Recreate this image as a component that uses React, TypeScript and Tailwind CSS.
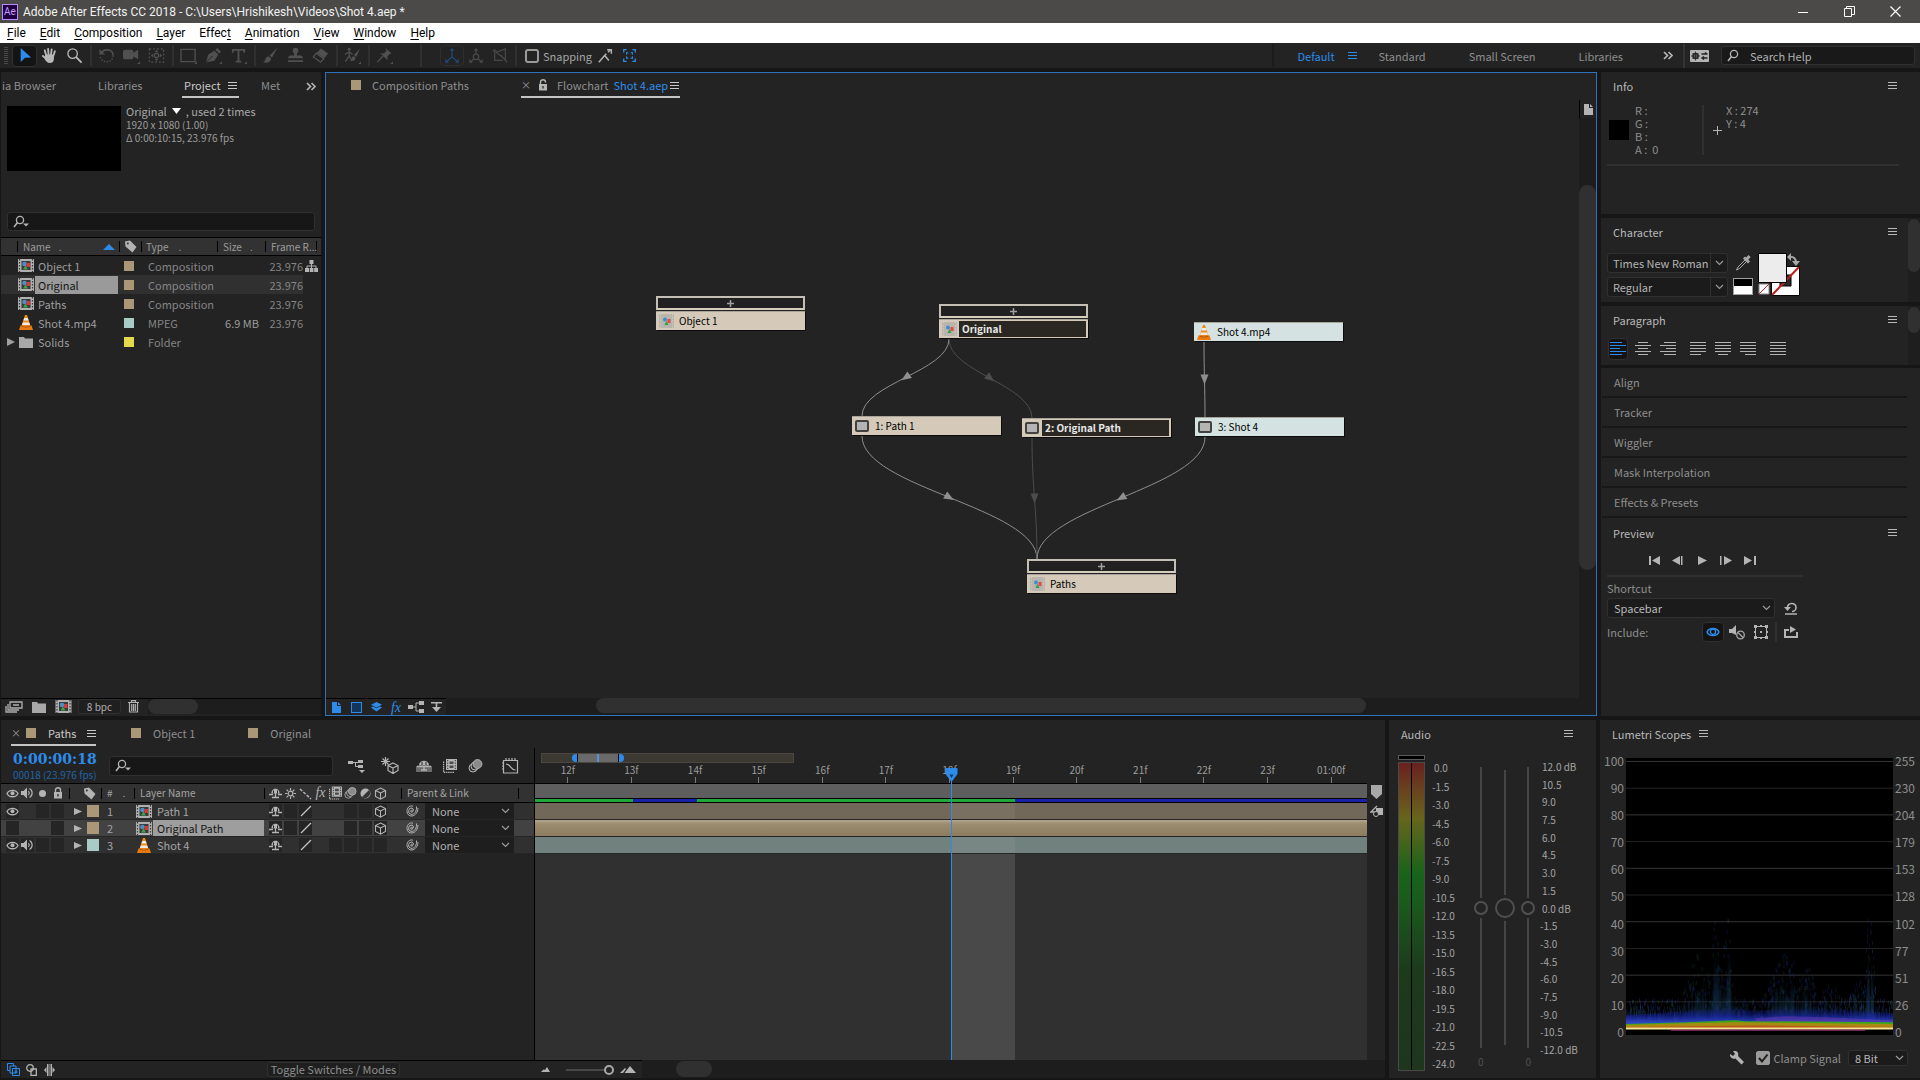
import { useState, type ReactNode } from 'react';
import { clsx } from 'clsx';

interface IconProps {
  children: ReactNode;
  className?: string;
  size?: number;
}

// every glyph is drawn on an 18 unit grid
function Icon({ children, className, size = 18 }: IconProps) {
  return (
    <svg
      width={size}
      height={size}
      viewBox="0 0 18 18"
      fill="none"
      stroke="currentColor"
      strokeWidth="1.4"
      className={clsx('shrink-0', className)}
      aria-hidden="true"
    >
      {children}
    </svg>
  );
}

const MenuGlyph = ({ className }: { className?: string }) => (
  <svg width="9" height="9" viewBox="0 0 9 9" className={clsx('shrink-0', className)} aria-hidden="true">
    <path d="M0 1.5h9M0 4.5h9M0 7.5h9" stroke="currentColor" strokeWidth="1" />
  </svg>
);

const MoreGlyph = () => (
  <svg width="11" height="9" viewBox="0 0 11 9" aria-hidden="true">
    <path d="M1 1l3.500 3.500L1 8M5.500 1L9 4.500 5.500 8" stroke="#b4b4b4" strokeWidth="1.700" fill="none" />
  </svg>
);

const Chevron = ({ className }: { className?: string }) => (
  <svg width="9" height="6" viewBox="0 0 9 6" className={className} aria-hidden="true">
    <path d="M1 1l3.500 3.500L8 1" stroke="#9a9a9a" strokeWidth="1.200" fill="none" />
  </svg>
);

const SearchGlyph = ({ arrow }: { arrow?: boolean }) => (
  <svg width="18" height="14" viewBox="0 0 18 14" fill="none" className="shrink-0" aria-hidden="true">
    <circle cx="8" cy="5" r="3.600" stroke="#b4b4b4" strokeWidth="1.300" />
    <path d="M5.500 7.600L2 12" stroke="#b4b4b4" strokeWidth="1.600" />
    {arrow && <path d="M11 8.500h6l-3 3z" fill="#b4b4b4" />}
  </svg>
);

const CompIcon = ({ size = 16 }: { size?: number }) => (
  <svg width={size} height="13" viewBox="0 0 16 13" className="shrink-0" aria-hidden="true">
    <rect width="16" height="13" fill="#b0b0b0" />
    <path d="M1.500 0v13M14.500 0v13" stroke="#3a3a3a" strokeWidth="1.200" strokeDasharray="1.500 1.500" />
    <rect x="3.500" y="2" width="9" height="9" fill="#3a3a3a" />
    <circle cx="6.500" cy="5" r="2.300" fill="#4a90c8" />
    <rect x="8.500" y="4" width="3.500" height="4" fill="#d23c32" />
    <path d="M5 10.500l2.500-4 2.500 4z" fill="#3da34d" />
  </svg>
);

const ConeIcon = () => (
  <svg width="14" height="15" viewBox="0 0 14 15" className="shrink-0" aria-hidden="true">
    <path d="M6 0h2l3.500 11h-9z" fill="#f08a1c" />
    <path d="M5.200 3h3.600l.8 2.500H4.400zM3.800 7.500h6.400l.8 2.500H3z" fill="#f0ece4" />
    <path d="M1.500 10.500h11L14 15H0z" fill="#e87a10" />
    <path d="M3 10.500c1 1.500 7 1.500 8 0l.5 1c-1.500 1.500-7.500 1.500-9 0z" fill="#b85a08" />
  </svg>
);

const FolderIcon = () => (
  <svg width="14" height="12" viewBox="0 0 14 12" className="shrink-0" aria-hidden="true">
    <path d="M0 1h5l1 1.500h8V12H0z" fill="#a8a8a8" />
  </svg>
);

const TagIcon = () => (
  <svg width="13" height="13" viewBox="0 0 13 13" className="shrink-0" aria-hidden="true">
    <path d="M1 1.500L6 .5l6.500 6.500-4 5.500L1.500 6.500z" fill="#b4b4b4" />
    <circle cx="3.800" cy="3.500" r="1" fill="#323232" />
  </svg>
);

const EyeIcon = ({ className }: { className?: string }) => (
  <svg width="13" height="9" viewBox="0 0 13 9" fill="none" className={className} aria-hidden="true">
    <path d="M1 4.500C3 .2 10 .2 12 4.500 10 8.800 3 8.800 1 4.500z" stroke="currentColor" strokeWidth="1.300" />
    <circle cx="6.500" cy="4.300" r="2" fill="currentColor" />
  </svg>
);

const SpeakerIcon = () => (
  <svg width="13" height="12" viewBox="0 0 13 12" fill="none" aria-hidden="true">
    <path d="M0 4h2.500L6 .5v11L2.500 8H0z" fill="#b4b4b4" />
    <path d="M7.500 4q1.500 2 0 4M8.500 1.500c3.500 2 3.500 7 0 9" stroke="#b4b4b4" strokeWidth="1.200" />
  </svg>
);

const LockIcon = ({ open }: { open?: boolean }) => (
  <svg width="10" height="12" viewBox="0 0 10 12" fill="none" className="shrink-0" aria-hidden="true">
    <path d={open ? 'M2.500 5V3c0-3 5-3 5 0v.5' : 'M2.500 5V3c0-3 5-3 5 0v2'} stroke="#b4b4b4" strokeWidth="1.400" />
    <rect x="1" y="5" width="8" height="6.500" fill="#b4b4b4" />
    <path d="M5 7v2.500" stroke="#2a2a2a" strokeWidth="1.300" />
  </svg>
);

const ShyIcon = () => (
  <svg width="13" height="13" viewBox="0 0 13 13" fill="none" stroke="#b4b4b4" aria-hidden="true">
    <path d="M2.500 6.500C2 0 11 0 10.500 6.500z" fill="#b4b4b4" stroke="none" />
    <path d="M4.500 3.500v3M8.500 3.500v3" stroke="#2a2a2a" />
    <path d="M0 7.500h4M9 7.500h4M6.500 5v6M3 10.500h7" strokeWidth="1.300" />
  </svg>
);

const CubeIcon = () => (
  <svg width="13" height="13" viewBox="0 0 13 13" fill="none" stroke="#b4b4b4" strokeWidth="1.100" aria-hidden="true">
    <path d="M6.500 1l5 2.500v6l-5 2.700-5-2.700v-6zM1.500 3.500l5 2.500 5-2.500M6.500 6v6" />
  </svg>
);

const BlurIcon = () => (
  <svg width="15" height="14" viewBox="0 0 15 14" aria-hidden="true">
    <circle cx="5" cy="9" r="4" fill="#323232" stroke="#b4b4b4" />
    <circle cx="7" cy="7" r="4" fill="#323232" stroke="#b4b4b4" />
    <circle cx="9.500" cy="5" r="4.400" fill="#8a8a8a" stroke="#b4b4b4" />
  </svg>
);

const FilmIcon = () => (
  <svg width="14" height="14" viewBox="0 0 14 14" aria-hidden="true">
    <path d="M3 0h11v11H3z" fill="#b4b4b4" />
    <path d="M.6 2.500v10.900h10.900" stroke="#b4b4b4" strokeWidth="1.200" fill="none" strokeDasharray="1.500 .7" />
    <path d="M4.700 1v9M12.300 1v9" stroke="#333" strokeDasharray="1.300 1.300" />
    <path d="M6.500 2.500h4v2.500h-4zM6.500 6.500h4v2.500h-4z" fill="#4a4a4a" />
  </svg>
);

const SunIcon = () => (
  <svg width="13" height="13" viewBox="0 0 13 13" stroke="#b4b4b4" strokeWidth="1.200" fill="none" aria-hidden="true">
    <circle cx="6.500" cy="6.500" r="2.300" />
    <path d="M6.500 1v2.500M6.500 9.500V12M1 6.500h2.500M9.500 6.500H12M2.600 2.600l1.700 1.700M8.700 8.700l1.700 1.700M10.400 2.600L8.700 4.300M4.300 8.700l-1.700 1.700" />
  </svg>
);

const SpiralIcon = () => (
  <svg width="13" height="12" viewBox="0 0 13 12" stroke="#b4b4b4" strokeWidth="1" fill="none" className="shrink-0" aria-hidden="true">
    <path d="M6.500 5.500A1 1 0 1 0 6 7.200 2.300 2.300 0 0 0 6 3 3.200 3.200 0 0 0 5 9.300C8.500 10 11 6 10.500 1.500" />
    <path d="M7 1.200C3 0 .8 3.500 1 6.500c.2 3 2.500 4.800 5 4.500 3.500-.5 6-4 5.900-8" />
  </svg>
);

const FxGlyph = ({ className }: { className?: string }) => (
  <span className={clsx("font-['Liberation_Serif',serif] text-sm leading-none italic", className)}>fx</span>
);

interface SelectProps {
  label: string;
  options: string[];
  className?: string;
  selectClassName?: string;
  divided?: boolean;
}

function Select({ label, options, className, selectClassName, divided }: SelectProps) {
  return (
    <span className={clsx('relative flex items-center', className)}>
      <select
        aria-label={label}
        className={clsx('h-full w-full appearance-none outline-none', selectClassName)}
      >
        {options.map((option) => (
          <option key={option}>{option}</option>
        ))}
      </select>
      <span
        className={clsx(
          'pointer-events-none absolute inset-y-0 right-0 flex w-[18px] items-center justify-center',
          divided && 'border-l border-[#303030]'
        )}
      >
        <Chevron />
      </span>
    </span>
  );
}

interface TabProps {
  children: ReactNode;
  active?: boolean;
  className?: string;
}

function Tab({ children, active, className }: TabProps) {
  return (
    <div
      className={clsx(
        'flex h-[26px] shrink-0 items-center border-b-2 pt-0.5',
        active ? 'border-[#c4c4c4] text-[#c8c8c8]' : 'border-transparent text-[#8e8e8e]',
        className
      )}
    >
      {children}
    </div>
  );
}

const Swatch = ({ className }: { className?: string }) => (
  <span className={clsx('size-[10px] shrink-0 bg-[#a99778]', className)} />
);

/* ---------- window chrome ---------- */

function TitleBar() {
  return (
    <header className="flex h-[23px] shrink-0 items-center bg-[#4b4a48] pl-0.5 font-[Roboto,sans-serif] text-xs text-[#f2f2f2]">
      <span className="flex size-4 items-center justify-center border border-[#b98cff] bg-[#1f0040] text-[10px] leading-none text-[#c79bff]">
        Ae
      </span>
      <h1 className="ml-[5px]">Adobe After Effects CC 2018 - C:\Users\Hrishikesh\Videos\Shot 4.aep *</h1>
      <div className="ml-auto flex">
        <button aria-label="Minimize" className="flex h-[23px] w-[46px] items-center justify-center">
          <svg width="10" height="10" viewBox="0 0 10 10" stroke="#fff"><path d="M0 5.500h10" /></svg>
        </button>
        <button aria-label="Restore" className="flex h-[23px] w-[46px] items-center justify-center">
          <svg width="11" height="11" viewBox="0 0 11 11" stroke="#fff" fill="none">
            <path d="M.5 2.500h7v8h-7zM2.500 2.500v-2h8v8h-3" />
          </svg>
        </button>
        <button aria-label="Close" className="mr-0.5 flex h-[23px] w-[46px] items-center justify-center">
          <svg width="11" height="11" viewBox="0 0 11 11" stroke="#fff" strokeWidth="1.200"><path d="M.5.5l10 10M10.500.5l-10 10" /></svg>
        </button>
      </div>
    </header>
  );
}

const menus: [string, string, string][] = [
  ['', 'F', 'ile'],
  ['', 'E', 'dit'],
  ['', 'C', 'omposition'],
  ['', 'L', 'ayer'],
  ['Effec', 't', ''],
  ['', 'A', 'nimation'],
  ['', 'V', 'iew'],
  ['', 'W', 'indow'],
  ['', 'H', 'elp'],
];

function MenuBar() {
  return (
    <nav className="flex h-5 shrink-0 items-center gap-[14px] bg-white pl-[7px] font-[Roboto,sans-serif] text-xs text-black">
      {menus.map(([before, key, after]) => (
        <button key={before + key + after}>
          {before}
          <u className="underline-offset-2">{key}</u>
          {after}
        </button>
      ))}
    </nav>
  );
}

const Corner = () => <path d="M18 15v3h-3z" fill="currentColor" stroke="none" />;

const toolGroups: { name: string; icon: ReactNode; tone?: string }[][] = [
  [
    { name: 'Selection', tone: 'text-[#2d8ceb]', icon: <path d="M5 1v15l4.500-4.500L16 11z" fill="currentColor" stroke="none" /> },
    {
      name: 'Hand',
      tone: 'text-[#b8b8b8]',
      icon: (
        <>
          <path d="M5.500 9L4 3.500M8 8.500L7.500 2M10.500 8.500l.8-6M13 9.500l1.700-5M5 12l-3-2.500" strokeWidth="2" strokeLinecap="round" />
          <path d="M4.500 8h9.200v4.500c0 3-1.500 4.500-4.500 4.500-2.500 0-4-2-5.500-4.500z" fill="currentColor" stroke="none" />
        </>
      ),
    },
    {
      name: 'Zoom',
      tone: 'text-[#b8b8b8]',
      icon: (
        <>
          <circle cx="7" cy="7" r="5" />
          <path d="M10.800 10.800L16.500 16.500" strokeWidth="2" />
        </>
      ),
    },
  ],
  [
    {
      name: 'Rotation',
      icon: (
        <>
          <path d="M4 6c3-5 12-3.500 12 3" strokeWidth="1.800" />
          <path d="M16 9c0 8-12 9-13.500 1.500" strokeDasharray="1.500 1.500" />
          <path d="M1.500 2v6h6z" fill="currentColor" stroke="none" />
        </>
      ),
    },
    {
      name: 'Camera',
      icon: (
        <>
          <path d="M0 5q0-2 2-2h7q2 0 2 2v1l5-3v10l-5-3v1q0 2-2 2H2q-2 0-2-2z" fill="currentColor" stroke="none" />
          <Corner />
        </>
      ),
    },
    {
      name: 'Pan Behind',
      icon: (
        <>
          <path d="M1.500 2h15v14h-15z" strokeDasharray="2 2" />
          <circle cx="9" cy="9" r="2.200" />
          <path d="M9 3l2 2.500H7zM9 15l2-2.500H7zM3 9l2.500-2v4zM15 9l-2.500-2v4z" fill="currentColor" stroke="none" />
        </>
      ),
    },
  ],
  [
    {
      name: 'Rectangle',
      icon: (
        <>
          <path d="M1 2.500h15v13H1z" />
          <Corner />
        </>
      ),
    },
    {
      name: 'Pen',
      icon: (
        <>
          <path d="M1 16.500L3.500 8 10 4l4 4-4 6.500zM11 3l2-2 4 4-2 2z" fill="currentColor" stroke="none" />
          <path d="M1.500 16L8 9.500" stroke="#232323" strokeWidth="1" />
          <Corner />
        </>
      ),
    },
    {
      name: 'Type',
      icon: (
        <>
          <path d="M3 6V3h12v3M9 3v13M6 15.500h6" strokeWidth="2" />
          <Corner />
        </>
      ),
    },
  ],
  [
    {
      name: 'Brush',
      icon: <path d="M16.500.5L8 9l2.500 2.500zM7 10c-4 0-2 4-6 6 4 2 9 0 8.500-4z" fill="currentColor" stroke="none" />,
    },
    {
      name: 'Clone Stamp',
      icon: <path d="M7.500 9V6.500a3 3 0 1 1 3 0V9H15q2 1 2 3H1q0-2 2-3zM1 14h16v2H1z" fill="currentColor" stroke="none" />,
    },
    {
      name: 'Eraser',
      icon: (
        <>
          <path d="M9.500 1.500L17 7l-4 5-8-6z" fill="currentColor" stroke="none" />
          <path d="M4.500 6.500l8 6-3.500 3.500-7.500-5.500z" />
        </>
      ),
    },
  ],
  [
    {
      name: 'Roto Brush',
      icon: (
        <>
          <path d="M17 1.500l-6.500 7 2.500 2zM10 9.500c-2 1-1.500 3.500-4 5 4 1 6.500-.5 6-3.500z" fill="currentColor" stroke="none" />
          <circle cx="5.500" cy="2.500" r="1.600" fill="currentColor" stroke="none" />
          <path d="M5.500 4.500v5l-4 6M5.500 9.500l2 3M1 8l4.500-3L9 8" />
          <Corner />
        </>
      ),
    },
  ],
  [
    {
      name: 'Puppet Pin',
      icon: (
        <>
          <path d="M10 1l6.500 6-2 .5-2.500 2.500.5 4L4.500 6.500l4 .5L11 4z" fill="currentColor" stroke="none" />
          <path d="M7.500 9.500L1.500 16" />
          <Corner />
        </>
      ),
    },
  ],
];

const ToolSeparator = () => (
  <span className="flex w-[7px] justify-center">
    <span className="h-[21px] w-0.5 bg-[#303030]" />
  </span>
);

function Toolbar() {
  const [snapping, setSnapping] = useState(false);

  return (
    <div className="flex h-[25px] shrink-0 items-center bg-[#232323]">
      <span className="mx-1 h-[18px] w-1 bg-[repeating-linear-gradient(#484848_0_1px,transparent_1px_2px)]" />
      {toolGroups.map((group, i) => (
        <div key={group[0].name} className="flex items-center">
          {i > 0 && <ToolSeparator />}
          {group.map((tool) => (
            <button
              key={tool.name}
              aria-label={tool.name}
              className={clsx(
                'flex h-[22px] w-[25px] items-center justify-center',
                tool.tone ?? 'text-[#505050]',
                tool.name === 'Selection' && 'rounded-sm border border-[#303030] bg-[#141414]'
              )}
            >
              <Icon size={17}>{tool.icon}</Icon>
            </button>
          ))}
        </div>
      ))}
      <span className="mr-[18px] ml-[23px] h-[23px] w-0.5 bg-[#303030]" />
      <button aria-label="Local axis" className="flex h-[21px] w-6 items-center justify-center rounded-sm border border-[#2e2e2e] text-[#1f4a78]">
        <Icon size={16}><path d="M9 1v9L2 16M9 10l7 6M7 3l2-2 2 2M2 13v3h3M13 16h3v-3" /></Icon>
      </button>
      <button aria-label="World axis" className="flex w-6 justify-center text-[#484848]">
        <Icon size={16}><path d="M9 1v6M7 3l2-2 2 2M7 12l-5 4M11 12l5 4M2 13v3h3M13 16h3v-3" /><circle cx="9" cy="10" r="3" /></Icon>
      </button>
      <button aria-label="View axis" className="flex w-6 justify-center text-[#484848]">
        <Icon size={16}><path d="M3 4v10h9M5 5l10-4v12zM1 4l2-2 2 2M10 8l7 8" /></Icon>
      </button>
      <ToolSeparator />
      <label className="ml-1.5 flex items-center gap-1 text-[#a6a6a6]">
        <input
          type="checkbox"
          checked={snapping}
          onChange={(e) => setSnapping(e.target.checked)}
          className="size-[14px] appearance-none rounded-[3px] border-2 border-[#9a9a9a] checked:bg-[#9a9a9a]"
        />
        Snapping
      </label>
      <button aria-label="Snap to edges" className="ml-1.5 text-[#b0b0b0]">
        <Icon size={15}><path d="M1 17l7-8 5 6M8 9l2-2M12 5l3-3M11 2h5v5" strokeWidth="1.800" /></Icon>
      </button>
      <button aria-label="Snap to features" className="ml-2.5 text-[#2d8ceb]">
        <Icon size={13}>
          <path d="M1 5V1h4M13 1h4v4M17 13v4h-4M5 17H1v-4" strokeWidth="1.800" />
          <path d="M7.500 5.500L5 5v3M10.500 5.500L13 5v3M7.500 12.500L5 13v-3M10.500 12.500L13 13v-3" />
        </Icon>
      </button>

      <div className="ml-auto flex items-center text-[#8e8e8e]">
        <span className="h-[23px] w-0.5 bg-[#1b1b1b]" />
        <button className="ml-[23px] flex items-center gap-[13px] text-[#2d8ceb]">
          Default <MenuGlyph />
        </button>
        <button className="ml-[22px]">Standard</button>
        <button className="ml-[43px]">Small Screen</button>
        <button className="ml-[43px]">Libraries</button>
        <button aria-label="More workspaces" className="ml-10"><MoreGlyph /></button>
        <span className="mr-[5px] ml-[9px] h-6 w-0.5 bg-[#343434]" />
        <button aria-label="Sync settings">
          <svg width="19" height="12" viewBox="0 0 19 12">
            <rect width="19" height="12" rx="1" fill="#b4b4b4" />
            <circle cx="5.500" cy="6" r="2.500" fill="none" stroke="#232323" strokeWidth="1.500" />
            <path d="M5.500 1.500v9M1 6h9M2.500 3l6 6M8.500 3l-6 6" stroke="#232323" strokeWidth=".8" />
            <path d="M11.500 4h6M15 2.500L17 4M17.500 8h-6M14 6.500L12 8l2 1.500" stroke="#232323" strokeWidth="1.300" />
          </svg>
        </button>
        <label className="mr-[5px] ml-3 flex h-[19px] w-[194px] items-center gap-1.5 rounded-[3px] border border-[#303030] bg-[#191919] pl-1">
          <SearchGlyph />
          <input
            aria-label="Search Help"
            placeholder="Search Help"
            className="w-full bg-transparent outline-none placeholder:text-[#b0b0b0]"
          />
        </label>
      </div>
    </div>
  );
}

/* ---------- project ---------- */

const items = [
  { name: 'Object 1', kind: 'comp', swatch: 'bg-[#a99778]', type: 'Composition', size: '', rate: '23.976' },
  { name: 'Original', kind: 'comp', swatch: 'bg-[#a99778]', type: 'Composition', size: '', rate: '23.976', selected: true },
  { name: 'Paths', kind: 'comp', swatch: 'bg-[#a99778]', type: 'Composition', size: '', rate: '23.976' },
  { name: 'Shot 4.mp4', kind: 'video', swatch: 'bg-[#a9cbc5]', type: 'MPEG', size: '6.9 MB', rate: '23.976' },
  { name: 'Solids', kind: 'folder', swatch: 'bg-[#e4d84c]', type: 'Folder', size: '', rate: '' },
];

function HeadCell({ children, className }: { children?: ReactNode; className?: string }) {
  return (
    <th className="p-0 font-normal">
      <div className={clsx('flex h-[11px] items-center border-l border-black whitespace-nowrap', className)}>{children}</div>
    </th>
  );
}

function ProjectPanel() {
  return (
    <section className="flex w-80 shrink-0 flex-col bg-[#232323] text-[#9c9c9c]">
      <div className="flex h-7 shrink-0">
        <Tab className="w-[97px] pl-px">ia Browser</Tab>
        <Tab className="w-[84px]">Libraries</Tab>
        <Tab active className="w-[57px] justify-between px-0.5">
          Project <MenuGlyph />
        </Tab>
        <Tab className="ml-[22px] w-[45px]">Met</Tab>
        <button aria-label="More panels"><MoreGlyph /></button>
      </div>

      <div className="flex h-28 shrink-0 pt-1.5 pl-1.5">
        <div className="h-[65px] w-[114px] bg-black" />
        <div className="-mt-0.5 ml-[5px]">
          <p className="flex h-[14px] items-center gap-[5px] text-[#a8a8a8]">
            Original
            <svg width="9" height="6" viewBox="0 0 9 6"><path d="M0 0h9L4.500 6z" fill="#fff" /></svg>
            , used 2 times
          </p>
          <p className="text-[10px] leading-[13px]">1920 x 1080 (1.00)</p>
          <p className="text-[10px] leading-[13px]">Δ 0:00:10:15, 23.976 fps</p>
        </div>
      </div>

      <label className="mr-[6px] ml-1.5 flex h-[19px] shrink-0 items-center rounded-[3px] border border-[#303030] bg-[#171717] pl-1">
        <SearchGlyph arrow />
        <input aria-label="Search project" className="w-full bg-transparent outline-none" />
      </label>

      <table className="mt-1.5 w-full table-fixed border-collapse text-left">
        <colgroup>
          <col className="w-4" />
          <col className="w-[102px]" />
          <col className="w-[22px]" />
          <col className="w-[76px]" />
          <col className="w-12" />
          <col className="w-[38px]" />
          <col />
        </colgroup>
        <thead className="bg-[#323232] text-[10px]">
          <tr className="h-[18px] border-y border-black">
            <th className="p-0" />
            <HeadCell className="pl-[5px]">
              Name
              <span className="ml-2">.</span>
              <svg width="12" height="6" viewBox="0 0 12 6" className="mr-1 ml-auto"><path d="M6 0l6 6H0z" fill="#2d8ceb" /></svg>
            </HeadCell>
            <HeadCell className="pl-1"><TagIcon /></HeadCell>
            <HeadCell className="pl-1">Type<span className="ml-2.5">.</span></HeadCell>
            <HeadCell className="pl-[5px]">Size<span className="ml-2">.</span></HeadCell>
            <th colSpan={2} className="p-0 pr-1 font-normal">
              <div className="flex h-[11px] items-center border-x border-black pl-[5px] whitespace-nowrap">Frame R...</div>
            </th>
          </tr>
        </thead>
        <tbody>
          {items.map((item, i) => {
            const cell = clsx('p-0', item.selected && 'bg-[#303030]');
            return (
              <tr key={item.name} className="h-[19px]">
                <td className={cell}>
                  {item.kind === 'folder' && (
                    <svg width="8" height="8" viewBox="0 0 8 8" className="ml-1.5"><path d="M0 0l8 4-8 4z" fill="#a0a0a0" /></svg>
                  )}
                </td>
                <td className={cell}>
                  <div className="flex h-[19px] items-center">
                    <span className="flex w-[18px] shrink-0 items-center justify-center">
                      {item.kind === 'comp' && <CompIcon />}
                      {item.kind === 'video' && <ConeIcon />}
                      {item.kind === 'folder' && <FolderIcon />}
                    </span>
                    <span
                      className={clsx(
                        'flex h-[18px] flex-1 items-center pl-[3px]',
                        item.selected && 'mr-px bg-[#9a9a9a] text-[#161616]'
                      )}
                    >
                      {item.name}
                    </span>
                  </div>
                </td>
                <td className={cell}><span className={clsx('ml-[5px] block size-[10px]', item.swatch)} /></td>
                <td className={clsx(cell, 'pl-[7px] text-[#858585]')}>{item.type}</td>
                <td className={clsx(cell, 'pr-1.5 text-right whitespace-nowrap')}>{item.size}</td>
                <td className={clsx(cell, 'text-right text-[#858585]')}>{item.rate}</td>
                <td className="p-0">
                  {i === 0 && (
                    <svg width="13" height="12" viewBox="0 0 13 12" fill="#b4b4b4" className="ml-0.5">
                      <path d="M4.500 0h4v4h-4zM0 8h4v4H0zM4.700 8h3.800v4H4.700zM9.200 8H13v4H9.200z" />
                      <path d="M6.500 4v4M2 8V6h9v2" stroke="#b4b4b4" fill="none" />
                    </svg>
                  )}
                </td>
              </tr>
            );
          })}
        </tbody>
      </table>

      <div className="mt-auto flex h-[18px] shrink-0 items-center border-t border-black pb-0.5 pl-1 text-[#b0b0b0]">
        <button aria-label="Interpret footage">
          <svg width="18" height="12" viewBox="0 0 18 12" fill="none" stroke="#b0b0b0" strokeWidth="1.300">
            <path d="M5 1h12v6H5zM3 3v6h11M1 5v6h11M8 4h6" />
          </svg>
        </button>
        <button aria-label="New folder" className="ml-[9px]"><FolderIcon /></button>
        <button aria-label="New composition" className="ml-[9px]"><CompIcon size={17} /></button>
        <button className="ml-1.5 h-[15px] w-[43px] rounded-[3px] border border-[#303030] bg-[#1f1f1f] text-[10px] leading-[13px]">8 bpc</button>
        <button aria-label="Delete" className="ml-[7px]">
          <svg width="11" height="13" viewBox="0 0 11 13" fill="none" stroke="#b0b0b0" strokeWidth="1.200">
            <path d="M0 2.500h11M3.500 2V.7h4V2M1.500 3v9h8V3M3.700 4v7M5.500 4v7M7.300 4v7" />
          </svg>
        </button>
        <div className="ml-[9px] h-full flex-1 bg-[#1d1d1d]">
          <div className="h-[15px] w-[50px] rounded-full bg-[#303030]" />
        </div>
      </div>
    </section>
  );
}

/* ---------- flowchart ---------- */

interface FlowNode {
  x: number;
  y: number;
  label: string;
  kind: 'comp' | 'layer' | 'video';
  tone: 'sand' | 'aqua';
  selected?: boolean;
}

const nodes: FlowNode[] = [
  { x: 330, y: 196, label: 'Object 1', kind: 'comp', tone: 'sand' },
  { x: 613, y: 204, label: 'Original', kind: 'comp', tone: 'sand', selected: true },
  { x: 868, y: 222, label: 'Shot 4.mp4', kind: 'video', tone: 'aqua' },
  { x: 526, y: 316, label: '1: Path 1', kind: 'layer', tone: 'sand' },
  { x: 696, y: 318, label: '2: Original Path', kind: 'layer', tone: 'sand', selected: true },
  { x: 869, y: 317, label: '3: Shot 4', kind: 'layer', tone: 'aqua' },
  { x: 701, y: 459, label: 'Paths', kind: 'comp', tone: 'sand' },
];

const edges = [
  { from: [623, 239], to: [536, 316], color: '#8f8f8f', angle: 146 },
  { from: [623, 239], to: [706, 318], color: '#4c4c4c', angle: 38 },
  { from: [878, 242], to: [879, 317], color: '#8f8f8f', angle: 90 },
  { from: [536, 336], to: [711, 459], color: '#8f8f8f', angle: 30 },
  { from: [706, 338], to: [711, 459], color: '#4c4c4c', angle: 90 },
  { from: [879, 337], to: [711, 459], color: '#8f8f8f', angle: 150 },
];

function NodeCard({ node }: { node: FlowNode }) {
  return (
    <div className="absolute w-[149px]" style={{ left: node.x, top: node.y }}>
      {node.kind === 'comp' && (
        <button
          aria-label={`Expand ${node.label}`}
          className="mb-px flex h-[14px] w-full items-center justify-center border-2 border-[#c4bfb4] border-b-[#d6cebd] bg-[#212121]"
        >
          <svg width="7" height="7" viewBox="0 0 7 7"><path d="M3.500 0v7M0 3.500h7" stroke="#a0a0a0" strokeWidth="1.500" /></svg>
        </button>
      )}
      <div
        className={clsx(
          'flex h-[19px] items-center border-t border-[#a8a49a] text-[10px] text-black shadow-[1px_1px_0_#0c0c0c]',
          node.tone === 'sand' ? 'bg-[#d5cab9]' : 'bg-[#d4e3e1]'
        )}
      >
        <span className="flex w-5 shrink-0 justify-center">
          {node.kind === 'comp' && (
            <svg width="15" height="14" viewBox="0 0 15 14">
              <rect width="15" height="14" fill="#b9b5ac" />
              <path d="M1.500 0v14M13.500 0v14" stroke="#d0cabd" strokeDasharray="1.500 1.500" />
              <circle cx="6" cy="5.500" r="2" fill="#3d8fd0" />
              <path d="M8.500 5h3v4h-3z" fill="#e04a40" />
              <path d="M5.500 11L7.500 7l2 4z" fill="#2f9e48" />
            </svg>
          )}
          {node.kind === 'video' && <ConeIcon />}
          {node.kind === 'layer' && <span className="h-3 w-[14px] rounded-xs border-2 border-[#44423e] bg-[#b4b4b4]" />}
        </span>
        <span
          className={clsx(
            'flex items-center whitespace-nowrap',
            node.selected ? 'my-px mr-0.5 h-4 flex-1 bg-[#2a2723] pl-[3px] font-bold text-[#e8e8e8]' : 'pl-[3px]'
          )}
        >
          {node.label}
        </span>
      </div>
    </div>
  );
}

function FlowchartPanel() {
  return (
    <section className="flex min-w-0 flex-1 flex-col border border-[#2f74b8] bg-[#232323]">
      <div className="flex h-[27px] shrink-0 items-end pb-0.5">
        <Tab className="ml-[25px]">
          <Swatch className="mr-[11px]" />
          Composition Paths
        </Tab>
        <Tab active className="ml-[52px] w-[159px] pr-px">
          <button aria-label="Close flowchart" className="w-[7px] text-[10px] leading-none text-[#9a9a9a]">×</button>
          <span className="ml-2.5 flex"><LockIcon open /></span>
          <span className="ml-[9px] flex gap-[5px] whitespace-nowrap text-[#8e8e8e]">
            Flowchart <span className="text-[#2d8ceb]">Shot 4.aep</span>
          </span>
          <MenuGlyph className="ml-auto" />
        </Tab>
      </div>

      <div className="flex min-h-0 flex-1">
        <div className="relative min-w-0 flex-1 overflow-hidden">
          <svg className="absolute inset-0 size-full" fill="none">
            {edges.map(({ from: [x1, y1], to: [x2, y2], color, angle }, i) => {
              const bend = (y2 - y1) * 0.42;
              return (
                <g key={i}>
                  <path d={`M${x1} ${y1}C${x1} ${y1 + bend} ${x2} ${y2 - bend} ${x2} ${y2}`} stroke={color} />
                  <path
                    d="M5 0L-5 -4V4z"
                    fill={color}
                    transform={`translate(${(x1 + x2) / 2} ${(y1 + y2) / 2}) rotate(${angle})`}
                  />
                </g>
              );
            })}
          </svg>
          {nodes.map((node) => (
            <NodeCard key={node.label} node={node} />
          ))}
        </div>
        <div className="flex w-[17px] flex-col">
          <button aria-label="Comp marker" className="flex h-[18px] shrink-0 items-center justify-center border-l border-black">
            <svg width="9" height="11" viewBox="0 0 9 11"><path d="M0 0h5v4h4v7H0zM6 0l3 3H6z" fill="#b4b4b4" /></svg>
          </button>
          <div className="flex-1 bg-[#1d1d1d] pt-[67px]">
            <div className="h-[75%] rounded-full bg-[#303030]" />
          </div>
        </div>
      </div>

      <div className="flex h-[17px] shrink-0 items-center text-[#2d8ceb]">
        <div className="grid h-full w-[120px] grid-cols-6 place-items-center border-t border-black pb-px">
          <button aria-label="Show footage">
            <svg width="9" height="11" viewBox="0 0 9 11"><path d="M0 0h5v4h4v7H0zM6 0l3 3H6z" fill="#2d8ceb" /></svg>
          </button>
          <button aria-label="Show solids" className="size-[11px] border border-[#2d8ceb] bg-[#12355a]" />
          <button aria-label="Show layers">
            <svg width="11" height="10" viewBox="0 0 11 10" fill="#2d8ceb">
              <path d="M5.500 0L11 2.700 5.500 5.400 0 2.700zM0 5.500l2-1 3.500 1.800L9 4.500l2 1L5.500 9.500z" />
            </svg>
          </button>
          <button aria-label="Show effects"><FxGlyph /></button>
          <button aria-label="Flow lines">
            <svg width="16" height="12" viewBox="0 0 16 12" fill="#b4b4b4">
              <path d="M0 4h5v4H0zM11 0h5v4h-5zM11 8h5v4h-5z" />
              <path d="M5 6h3M12 2H8v8h4" stroke="#b4b4b4" fill="none" />
            </svg>
          </button>
          <button aria-label="Flow direction">
            <svg width="11" height="10" viewBox="0 0 11 10" fill="#b4b4b4"><path d="M0 0h11v1.500H0zM4.700 1h1.600v4H10L5.500 10 1 5h3.700z" /></svg>
          </button>
        </div>
        <div className="flex h-full flex-1 bg-[#1d1d1d]">
          <div className="ml-[13%] h-[15px] w-[67%] rounded-full bg-[#303030]" />
        </div>
      </div>
    </section>
  );
}

/* ---------- right column ---------- */

const PanelHead = ({ title, scrolls }: { title: string; scrolls?: boolean }) => (
  <div className={clsx('flex h-7 shrink-0 items-center justify-between pb-px pl-3 text-[#b8b8b8]', scrolls ? 'pr-[11px]' : 'pr-[23px]')}>
    <h2>{title}</h2>
    <MenuGlyph />
  </div>
);

const alignments = [
  { name: 'Left align', rows: [[2, 14], [2, 18], [2, 12], [2, 18], [2, 14]] },
  { name: 'Center', rows: [[5, 15], [2, 18], [5, 15], [2, 18], [5, 15]] },
  { name: 'Right align', rows: [[6, 18], [2, 18], [8, 18], [2, 18], [6, 18]] },
  { name: 'Justify last left', rows: [[2, 18], [2, 18], [2, 18], [2, 18], [2, 13]], gap: true },
  { name: 'Justify last center', rows: [[2, 18], [2, 18], [2, 18], [2, 18], [5, 15]] },
  { name: 'Justify last right', rows: [[2, 18], [2, 18], [2, 18], [2, 18], [7, 18]] },
  { name: 'Justify all', rows: [[2, 18], [2, 18], [2, 18], [2, 18], [2, 18]], gap: true },
];

const transport = [
  { name: 'First frame', d: 'M1 0h2v9H1zM12 0v9L4 4.500z' },
  { name: 'Previous frame', d: 'M0 4.500L8 0v9zM9 0h1.500v9H9z' },
  { name: 'Play', d: 'M2 0l9 4.500L2 9z' },
  { name: 'Next frame', d: 'M0 0h1.500v9H0zM4 0l8 4.500L4 9z' },
  { name: 'Last frame', d: 'M0 0l8 4.500L0 9zM10 0h2v9h-2z' },
];

const fontSelect = 'rounded-[3px] border border-[#303030] bg-[#1b1b1b] pl-[5px] text-[#b4b4b4]';

function RightColumn() {
  return (
    <aside className="flex w-[319px] shrink-0 flex-col text-[#8e8e8e]">
      <section className="h-[142px] shrink-0 bg-[#232323]">
        <PanelHead title="Info" />
        <div className="mr-[21px] ml-1.5 flex h-[66px] items-center border-b-2 border-[#303030] pb-1">
          <div className="ml-0.5 h-5 w-5 bg-black" />
          <div className="ml-1.5 w-[67px] leading-[13px]">
            <p>R :</p>
            <p>G :</p>
            <p>B :</p>
            <p>A :&nbsp;&nbsp;0</p>
          </div>
          <div className="h-[50px] w-0.5 bg-[#303030]" />
          <svg width="9" height="9" viewBox="0 0 9 9" className="ml-[9px]"><path d="M4.500 0v9M0 4.500h9" stroke="#b4b4b4" /></svg>
          <div className="mb-[26px] ml-1 leading-[13px]">
            <p>X : 274</p>
            <p>Y : 4</p>
          </div>
        </div>
      </section>

      <section className="mt-1 flex h-[84px] shrink-0 bg-[#232323]">
        <div className="flex-1">
          <PanelHead title="Character" scrolls />
          <div className="-mr-3 flex pt-[7px] pl-1.5">
            <div className="flex flex-col gap-1">
              <Select label="Font family" options={['Times New Roman']} className="h-5 w-[121px]" selectClassName={fontSelect} divided />
              <Select label="Font style" options={['Regular']} className="h-5 w-[121px]" selectClassName={fontSelect} divided />
            </div>
            <div className="ml-[5px] flex w-5 flex-col items-center gap-[7px]">
              <button aria-label="Eyedropper">
                <svg width="17" height="18" viewBox="0 0 17 18" fill="none" stroke="#a8a8a8">
                  <path d="M10.500 6.500L3 14l-1.500 3 3-1.500L12 8" />
                  <path d="M9 4.500l5 5M11.500 6.500L14.500 3" strokeWidth="3" />
                </svg>
              </button>
              <button aria-label="Set to black or white" className="h-[17px] w-5 border border-[#a0a0a0] bg-[linear-gradient(#000_50%,#fff_50%)]" />
            </div>
            <svg width="44" height="44" viewBox="0 0 44 44" className="ml-1">
              <path d="M14.500 13.500h28v29h-28z" fill="#fff" stroke="#000" />
              <path d="M23 22h11v11H23z" fill="#2a2a2a" stroke="#000" />
              <path d="M15 42L42 14" stroke="#b8201c" strokeWidth="2" />
              <path d="M1.500.5h28v29h-28z" fill="#ececec" stroke="#000" />
              <path d="M2 31h10v10H2z" fill="#fff" stroke="#888" />
              <path d="M2 41l10-10" stroke="#c8201c" />
              <path d="M32 4q7-1 7 6" stroke="#a8a8a8" strokeWidth="2" fill="none" />
              <path d="M30 4l4-4v8zM35 8h8l-4 5z" fill="#a8a8a8" />
            </svg>
          </div>
        </div>
        <div className="w-3 bg-[#1e1e1e] pt-px"><div className="h-[53px] rounded-full bg-[#303030]" /></div>
      </section>

      <section className="mt-1 flex h-[59px] shrink-0 bg-[#232323]">
        <div className="flex-1">
          <PanelHead title="Paragraph" scrolls />
          <div className="-mr-3 flex items-center gap-[5px] pt-1 pl-[7px]">
            {alignments.map(({ name, rows, gap }, i) => (
              <button
                key={name}
                aria-label={name}
                className={clsx(
                  'flex h-[22px] w-5 items-center justify-center rounded-sm border',
                  i === 0 ? 'border-[#303030] bg-[#141414] text-[#2d8ceb]' : 'border-transparent text-[#b4b4b4]',
                  gap && 'ml-[5px]'
                )}
              >
                <svg width="16" height="14" viewBox="2 0 16 14" className="shrink-0" stroke="currentColor">
                  {rows.map(([a, b], r) => (
                    <path key={r} d={`M${a} ${r * 3 + 0.5}H${b}`} />
                  ))}
                </svg>
              </button>
            ))}
          </div>
        </div>
        <div className="w-3 bg-[#1e1e1e] pt-px"><div className="h-[26px] rounded-full bg-[#303030]" /></div>
      </section>

      <div className="mt-[3px] shrink-0 bg-[#232323] pr-[13px] pl-px">
        {['Align', 'Tracker', 'Wiggler', 'Mask Interpolation', 'Effects & Presets'].map((name) => (
          <button key={name} className="flex h-[30px] w-full items-center border-b-2 border-[#171717] pl-3 text-left">
            {name}
          </button>
        ))}
      </div>

      <section className="flex-1 bg-[#232323] pt-px">
        <PanelHead title="Preview" />
        <div className="mr-[117px] ml-1.5 flex items-center justify-center gap-[12px] border-b-2 border-[#303030] pt-[9px] pr-1.5 pb-[10px]">
          {transport.map((button) => (
            <button key={button.name} aria-label={button.name}>
              <svg width="12" height="9" viewBox="0 0 12 9" fill="#b4b4b4"><path d={button.d} /></svg>
            </button>
          ))}
        </div>
        <div className="pl-1.5">
          <p className="pt-[3px] leading-4">Shortcut</p>
          <div className="mt-0.5 flex items-center">
            <Select
              label="Shortcut"
              options={['Spacebar']}
              className="h-5 w-[168px]"
              selectClassName="rounded-[3px] border border-[#303030] bg-[#1b1b1b] pl-1.5 text-[#b8b8b8]"
            />
            <button aria-label="Reset" className="ml-[9px]">
              <svg width="14" height="13" viewBox="0 0 14 13" fill="none" stroke="#b4b4b4" strokeWidth="1.600">
                <path d="M3.500 6C3 0 12 0 12 5.500 12 8 10 9.500 8 9.500M1 12h12" />
                <path d="M0 5h7L3.500 9z" fill="#b4b4b4" stroke="none" />
              </svg>
            </button>
          </div>
          <div className="mt-1 flex items-center">
            <span className="w-[95px]">Include:</span>
            <button aria-label="Include video" className="flex h-5 w-[22px] items-center justify-center rounded-sm border border-[#303030] bg-[#141414] text-[#2d8ceb]">
              <svg width="14" height="10" viewBox="0 0 14 10" fill="none" stroke="currentColor">
                <path d="M1 5C3 .3 11 .3 13 5 11 9.700 3 9.700 1 5z" strokeWidth="1.500" />
                <circle cx="7" cy="4.800" r="2.600" strokeWidth="1.300" />
              </svg>
            </button>
            <button aria-label="Include audio" className="ml-1">
              <svg width="18" height="16" viewBox="0 0 18 16" fill="none" stroke="#a8a8a8">
                <path d="M1 5h3l4-4v10L4 9H1z" fill="#b4b4b4" stroke="none" />
                <circle cx="12.500" cy="11" r="3.800" strokeWidth="1.300" />
                <path d="M10 8.500l5 5" strokeWidth="1.300" />
              </svg>
            </button>
            <button aria-label="Include overlays" className="ml-2">
              <svg width="14" height="14" viewBox="0 0 14 14" fill="none" stroke="#b4b4b4">
                <path d="M1.500 1.500h11v11h-11z" />
                <path d="M0 0h3v3H0zM11 0h3v3h-3zM0 11h3v3H0zM11 11h3v3h-3zM6 6h2v2H6zM6 0h2v2H6zM6 12h2v2H6zM0 6h2v2H0zM12 6h2v2h-2z" fill="#b4b4b4" stroke="none" />
              </svg>
            </button>
            <span className="ml-[7px] h-5 w-0.5 bg-[#303030]" />
            <button aria-label="Loop options" className="ml-[7px]">
              <svg width="14" height="12" viewBox="0 0 14 12" fill="none" stroke="#b4b4b4" strokeWidth="2">
                <path d="M5 4H1v7h12V6" />
                <path d="M6 0l6 3.500L6 7z" fill="#b4b4b4" stroke="none" />
              </svg>
            </button>
          </div>
        </div>
      </section>
    </aside>
  );
}

/* ---------- timeline ---------- */

const layers = [
  { id: 1, name: 'Path 1', video: false, visible: true, audio: false, swatch: 'bg-[#a99778]', track: 'bg-[#72685a]' },
  { id: 2, name: 'Original Path', video: false, visible: false, audio: false, swatch: 'bg-[#a99778]', track: 'bg-[linear-gradient(#b3a78e,#9c8c6f_25%,#8c7c60)]', selected: true },
  { id: 3, name: 'Shot 4', video: true, visible: true, audio: true, swatch: 'bg-[#a9cbc5]', track: 'bg-[#71817e]' },
];

const ruler = ['12f', '13f', '14f', '15f', '16f', '17f', '18f', '19f', '20f', '21f', '22f', '23f', '01:00f'];

const Slot = ({ box, children }: { box?: boolean; children?: ReactNode }) => (
  <span className="flex w-[15px] shrink-0 justify-center">
    <span className={clsx('flex h-[14px] w-[13px] items-center justify-center', box && 'bg-[#252525]')}>{children}</span>
  </span>
);

function LayerTable() {
  return (
    <table className="w-full table-fixed border-collapse text-left text-[#a4a4a4]">
      <colgroup>
        <col className="w-[68px]" />
        <col className="w-8" />
        <col className="w-[33px]" />
        <col className="w-[130px]" />
        <col className="w-[137px]" />
        <col className="w-[117px]" />
        <col />
      </colgroup>
      <thead className="bg-[#323232] text-[10px]">
        <tr className="h-[19px] border-y border-black">
          <th className="p-0">
            <div className="flex items-center pl-1 text-[#b4b4b4]">
              <Slot><EyeIcon /></Slot>
              <Slot><SpeakerIcon /></Slot>
              <Slot><span className="size-[7px] rounded-full bg-[#b4b4b4]" /></Slot>
              <Slot><LockIcon /></Slot>
            </div>
          </th>
          <HeadCell className="pl-[13px]"><TagIcon /></HeadCell>
          <HeadCell className="pl-[5px]">#<span className="ml-2.5">.</span></HeadCell>
          <HeadCell className="pl-[5px]">Layer Name</HeadCell>
          <HeadCell className="pl-[3px]">
            <Slot><ShyIcon /></Slot>
            <Slot><SunIcon /></Slot>
            <Slot>
              <svg width="13" height="13" viewBox="0 0 13 13"><path d="M1 2l11 10" stroke="#b4b4b4" strokeWidth="1.500" strokeDasharray="3 1.500" /></svg>
            </Slot>
            <Slot><FxGlyph className="text-[#b4b4b4]" /></Slot>
            <Slot><FilmIcon /></Slot>
            <Slot><BlurIcon /></Slot>
            <Slot>
              <svg width="11" height="11" viewBox="0 0 11 11"><circle cx="5.500" cy="5.500" r="5" fill="#b4b4b4" /><path d="M9 2A5 5 0 0 1 2 9z" fill="#333" /></svg>
            </Slot>
            <Slot><CubeIcon /></Slot>
          </HeadCell>
          <HeadCell className="pl-[5px]">Parent & Link</HeadCell>
          <HeadCell />
        </tr>
      </thead>
      <tbody>
        {layers.map((layer) => (
          <tr key={layer.id} className={clsx('h-[17px] border-b border-[#262626]', layer.selected ? 'bg-[#424242]' : 'bg-[#303030]')}>
            <td className="p-0">
              <div className="flex h-4 items-center pl-1 text-[#b4b4b4]">
                <Slot box>{layer.visible && <EyeIcon />}</Slot>
                <Slot box={layer.audio}>{layer.audio && <SpeakerIcon />}</Slot>
                <Slot box={!layer.selected} />
                <Slot box />
              </div>
            </td>
            <td className="p-0">
              <div className="flex items-center justify-between pr-0.5 pl-[5px]">
                <svg width="8" height="7" viewBox="0 0 8 7"><path d="M0 0l8 3.500L0 7z" fill="#b4b4b4" /></svg>
                <span className={clsx('size-3', layer.swatch)} />
              </div>
            </td>
            <td className="p-0 pl-1.5 leading-4">{layer.id}</td>
            <td className="p-0">
              <div className="flex h-4 items-center">
                <span className="flex w-[19px] shrink-0 justify-center">{layer.video ? <ConeIcon /> : <CompIcon />}</span>
                <span
                  className={clsx(
                    'flex h-4 flex-1 items-center pl-1 leading-4',
                    layer.selected && 'bg-[#9e9e9e] text-[#161616]'
                  )}
                >
                  {layer.name}
                </span>
              </div>
            </td>
            <td className="p-0">
              <div className="flex h-4 items-center pl-1">
                <Slot box><ShyIcon /></Slot>
                <Slot box={!layer.video} />
                <Slot box>
                  <svg width="12" height="12" viewBox="0 0 12 12"><path d="M1 11L11 1" stroke="#c4c4c4" strokeWidth="1.300" /></svg>
                </Slot>
                <Slot />
                <Slot box={layer.video} />
                <Slot box />
                <Slot box />
                <Slot box>{!layer.video && <CubeIcon />}</Slot>
              </div>
            </td>
            <td className="p-0">
              <div className="flex h-4 items-center pl-[5px]">
                <SpiralIcon />
                <Select
                  label={`Parent of ${layer.name}`}
                  options={['None']}
                  className="ml-1.5 h-4 w-[89px]"
                  selectClassName="bg-[#1e1e1e] pl-[7px] leading-4 text-[#b0b0b0]"
                />
              </div>
            </td>
            <td className="p-0" />
          </tr>
        ))}
      </tbody>
    </table>
  );
}

function Tracks() {
  return (
    <div className="relative flex min-w-0 flex-1 flex-col border-l border-black">
      <div className="mt-[5px] flex h-[10px] shrink-0">
        <div className="ml-1.5 flex w-[30.4%] border border-[#4c473e] bg-[#3c3832]">
          <span className="ml-[12%] w-[5px] rounded-l-full bg-[#2d8ceb]" />
          <span className="flex w-[42px] justify-center border-x border-black bg-[#6a6a6a]"><span className="w-0.5 bg-[#5a94cc]" /></span>
          <span className="w-[5px] rounded-r-full bg-[#2d8ceb]" />
        </div>
      </div>
      <div className="flex h-5 shrink-0 pr-1 pl-px text-[10px] leading-[14px] text-[#9c9c9c]">
        {ruler.map((mark) => (
          <div key={mark} className="flex min-w-0 flex-1 flex-col items-center">
            <span className="h-[14px] whitespace-nowrap">{mark}</span>
            <span className="h-1.5 w-px bg-[#7c7c7c]" />
          </div>
        ))}
      </div>
      <div className="h-4 shrink-0 border-y border-black bg-[#5e5e5e]" />
      <div className="flex h-[3px] shrink-0 bg-[#1c22a8]">
        <span className="w-[11.8%] bg-[#22a83a]" />
        <span className="w-[7.7%]" />
        <span className="w-[38.2%] bg-[#22a83a]" />
      </div>
      <div className="flex flex-1 flex-col border-t border-black bg-[#303030]">
        {layers.map((layer) => (
          <div key={layer.id} className={clsx('h-[17px] border-b border-[#262626]', layer.track)}>
            <div className={clsx('ml-[50%] h-full w-[7.7%]', !layer.selected && 'bg-white/5')} />
          </div>
        ))}
        <div className="ml-[50%] w-[7.7%] flex-1 bg-[#494949]" />
      </div>
      {/* playhead */}
      <div className="absolute top-5 bottom-0 left-1/2 w-px bg-[#2d8ceb]">
        <svg width="13" height="14" viewBox="0 0 13 14" className="absolute -left-1.5">
          <path d="M.5 0h12v6l-6 8-6-8z" fill="#2d8ceb" />
          <path d="M4.500 6.500h4L6.500 10z" fill="#12355a" />
        </svg>
      </div>
    </div>
  );
}

function TimelinePanel() {
  return (
    <section className="flex min-w-0 flex-1 flex-col bg-[#232323]">
      <div className="flex h-7 shrink-0">
        <Tab active className="ml-2.5 w-[85px]">
          <button aria-label="Close Paths" className="w-[7px] text-[10px] leading-none text-[#9a9a9a]">×</button>
          <Swatch className="ml-2" />
          <span className="ml-3">Paths</span>
          <MenuGlyph className="ml-auto" />
        </Tab>
        <Tab className="ml-[35px]"><Swatch className="mr-3" />Object 1</Tab>
        <Tab className="ml-[53px]"><Swatch className="mr-3" />Original</Tab>
      </div>

      <div className="flex min-h-0 flex-1">
        <div className="flex w-[533px] shrink-0 flex-col">
          <div className="flex h-[35px] shrink-0 items-center pl-3">
            <div className="w-24 text-[#2d8ceb]">
              <p className="font-['DejaVu_Serif','Noto_Sans',serif] text-sm leading-[18px] font-bold">0:00:00:18</p>
              <p className="text-[10px] leading-[14px] text-[#2264a6]">00018 (23.976 fps)</p>
            </div>
            <label className="flex h-5 w-[224px] items-center rounded-[3px] border border-[#303030] bg-[#171717] pl-1">
              <SearchGlyph arrow />
              <input aria-label="Search layers" className="w-full bg-transparent outline-none" />
            </label>
            <button aria-label="Mini flowchart" className="ml-[15px]">
              <svg width="17" height="14" viewBox="0 0 17 14" fill="#b4b4b4">
                <path d="M0 2h5v3H0zM10 1h5v3h-5zM10 6h5v3h-5zM11 11h6l-3 3z" />
                <path d="M5 3.500h5M7.500 3.500v4H10" stroke="#b4b4b4" fill="none" />
              </svg>
            </button>
            <button aria-label="Draft 3D" className="ml-4">
              <svg width="18" height="17" viewBox="0 0 18 17" fill="none" stroke="#b4b4b4" strokeWidth="1.200">
                <path d="M4.500 0v9M0 4.500h9M1.500 1.500l6 6M7.500 1.500l-6 6" />
                <path d="M12 6l5 2.500v5L12 16.500 7 13.500v-5zM7 8.500l5 2.500 5-2.500M12 11v5" fill="#232323" />
              </svg>
            </button>
            <button aria-label="Hide shy layers" className="ml-[17px]">
              <svg width="16" height="14" viewBox="0 0 16 14">
                <path d="M0 7h16v6H0z" fill="#6a6a6a" />
                <path d="M3 6.500C3 0 13 0 13 6.500z" fill="#b4b4b4" />
                <path d="M6 3v3M10 3v3" stroke="#232323" />
                <path d="M1 7.500h14M8 7v5M5 11h6" stroke="#b4b4b4" strokeWidth="1.300" />
              </svg>
            </button>
            <button aria-label="Frame blending" className="ml-[11px]"><FilmIcon /></button>
            <button aria-label="Motion blur" className="ml-[11px]"><BlurIcon /></button>
            <button aria-label="Graph editor" className="ml-[19px]">
              <svg width="17" height="16" viewBox="0 0 17 16" fill="none" stroke="#b4b4b4" strokeWidth="1.200">
                <path d="M1.500 2.500h14v12.500h-14zM4 0v2M7 0v2M10 0v2M13 0v2M0 5h1.500M0 8h1.500M0 11h1.500M4 6c5 0 4 6 9.500 6" />
              </svg>
            </button>
          </div>
          <LayerTable />
        </div>
        <Tracks />
        <div className="flex w-[18px] shrink-0 flex-col items-center gap-[6px] pt-[37px]">
          <svg width="11" height="14" viewBox="0 0 11 14"><path d="M0 0h11v9l-5.500 5L0 9z" fill="#a8a8a8" /></svg>
          <svg width="13" height="14" viewBox="0 0 13 14" fill="none" stroke="#b4b4b4">
            <path d="M6 3h7v7H6z" fill="#b4b4b4" stroke="none" />
            <path d="M7 1L1 7h5" strokeWidth="1.300" />
            <circle cx="6" cy="9" r="2.500" fill="#232323" />
          </svg>
        </div>
      </div>

      <div className="flex h-[18px] shrink-0 items-center">
        <div className="flex h-full w-[641px] shrink-0 items-center border-t border-black pl-1.5">
          <button aria-label="Layer switches pane">
            <svg width="13" height="13" viewBox="0 0 13 13" fill="none" stroke="#2d8ceb">
              <path d="M.5.5h6v7h-6z" /><path d="M3 3h6v7H3zM5.500 5.500h7v7h-7z" fill="#232323" /><path d="M9 7.500v3M7.500 9h3" />
            </svg>
          </button>
          <button aria-label="Transfer controls pane" className="ml-1.5">
            <svg width="11" height="12" viewBox="0 0 11 12" fill="none" stroke="#b4b4b4" strokeWidth="1.300">
              <circle cx="4" cy="4" r="3.300" /><path d="M5 5h5.300v6.300H5z" />
            </svg>
          </button>
          <button aria-label="In/Out pane" className="ml-[7px]">
            <svg width="11" height="12" viewBox="0 0 11 12">
              <path d="M3 0h5v12H3z" fill="#6a6a6a" />
              <path d="M3 0h1v12H3zM7 0h1v12H7zM0 6l2.500-3v6zM11 6L8.500 3v6z" fill="#b4b4b4" />
            </svg>
          </button>
          <button className="ml-[212px] h-[15px] w-[133px] rounded-[3px] border border-[#303030] bg-[#1f1f1f] leading-[13px] whitespace-nowrap text-[#8e8e8e]">
            Toggle Switches / Modes
          </button>
          <svg width="9" height="5" viewBox="0 0 9 5" className="ml-[141px]"><path d="M0 5l2.500-2.500L4 3l2-3 3 5z" fill="#b4b4b4" /></svg>
          <input
            type="range"
            aria-label="Timeline zoom"
            defaultValue={100}
            className="ml-4 h-3 w-12 appearance-none bg-[linear-gradient(#484848,#484848)] bg-[length:100%_2px] bg-center bg-no-repeat [&::-webkit-slider-thumb]:size-[10px] [&::-webkit-slider-thumb]:appearance-none [&::-webkit-slider-thumb]:rounded-full [&::-webkit-slider-thumb]:border-2 [&::-webkit-slider-thumb]:border-[#a8a8a8] [&::-webkit-slider-thumb]:bg-[#232323]"
          />
          <svg width="16" height="7" viewBox="0 0 16 7" className="ml-[6px]"><path d="M0 7l5-5 1 1-3 4zM4.500 7L10 0l6 7z" fill="#b4b4b4" /></svg>
        </div>
        <div className="h-full flex-1 bg-[#1d1d1d] pl-[34px]">
          <div className="mt-px h-4 w-9 rounded-full bg-[#303030]" />
        </div>
      </div>
    </section>
  );
}

/* ---------- audio ---------- */

const meterMarks = ['0.0', '-1.5', '-3.0', '-4.5', '-6.0', '-7.5', '-9.0', '-10.5', '-12.0', '-13.5', '-15.0', '-16.5', '-18.0', '-19.5', '-21.0', '-22.5', '-24.0'];
const gainMarks = ['12.0 dB', '10.5', '9.0', '7.5', '6.0', '4.5', '3.0', '1.5', '0.0 dB', '-1.5', '-3.0', '-4.5', '-6.0', '-7.5', '-9.0', '-10.5', '-12.0 dB'];

const fader =
  'appearance-none bg-[linear-gradient(#454545,#454545)] bg-[length:2px_100%] bg-center bg-no-repeat [writing-mode:vertical-lr] [&::-webkit-slider-thumb]:appearance-none [&::-webkit-slider-thumb]:rounded-full [&::-webkit-slider-thumb]:border-2 [&::-webkit-slider-thumb]:border-[#505050] [&::-webkit-slider-thumb]:bg-[#232323] [&::-webkit-slider-thumb]:shadow-[0_-3px_0_#232323,0_3px_0_#232323]';

function AudioPanel() {
  return (
    <section className="flex w-[207px] shrink-0 flex-col bg-[#232323]">
      <PanelHead title="Audio" />
      <div className="flex min-h-0 flex-1 pt-[7px] pb-[7px] pl-[9px] text-[10px] leading-[14px] text-[#a4a4a4]">
        <div className="flex w-[27px] flex-col gap-0.5">
          <div className="h-[5px] border border-[#5a5a5a] bg-black" />
          <div className="flex flex-1 justify-center border border-[#4a4a4a] bg-[linear-gradient(#6a211f,#68651c_18%,#17641a_36%,#1a5a1c_46%,#1c3a1c_68%,#1e361e)]">
            <span className="w-px bg-black" />
          </div>
        </div>
        <ul className="ml-[7px] flex w-7 flex-col justify-between pt-1.5 whitespace-nowrap">
          {meterMarks.map((mark) => (
            <li key={mark} className={clsx(mark === '0.0' && 'pl-0.5')}>{mark}</li>
          ))}
        </ul>
        <div className="ml-[14px] flex w-[61px] flex-col">
          <div className="flex min-h-0 flex-1 items-center justify-between pt-3">
            <input type="range" aria-label="Left level" className={clsx(fader, 'h-full w-[14px] [&::-webkit-slider-thumb]:size-[14px]')} />
            <input type="range" aria-label="Master level" className={clsx(fader, 'h-[98%] w-5 [&::-webkit-slider-thumb]:size-5')} />
            <input type="range" aria-label="Right level" className={clsx(fader, 'h-full w-[14px] [&::-webkit-slider-thumb]:size-[14px]')} />
          </div>
          <div className="mt-[7px] mb-0.5 flex justify-between px-1 text-[#505050]">
            <span>0</span>
            <span>0</span>
          </div>
        </div>
        <ul className="ml-[5px] flex flex-col justify-between pt-[5px] pb-[14px] whitespace-nowrap">
          {gainMarks.map((mark) => (
            <li key={mark} className={clsx(!mark.startsWith('-') && 'pl-0.5')}>{mark}</li>
          ))}
        </ul>
      </div>
    </section>
  );
}

/* ---------- scopes ---------- */

const percent = [100, 90, 80, 70, 60, 50, 40, 30, 20, 10, 0];
const levels = [255, 230, 204, 179, 153, 128, 102, 77, 51, 26, 0];

const noise = (n: number) => {
  const v = Math.sin(n * 127.1 + 11.7) * 43758.5453;
  return v - Math.floor(v);
};

// how tall the trace gets at each x of the waveform
const peaks = [
  [72, 12, 55],
  [90, 4, 85],
  [101, 5, 90],
  [160, 16, 55],
  [182, 8, 45],
  [205, 12, 30],
  [244, 4, 90],
  [235, 12, 34],
];
const envelope = (x: number) =>
  peaks.reduce((h, [c, w, a]) => Math.max(h, a * Math.exp(-((x - c) ** 2) / (2 * w * w))), 20);

const hues = ['#2030d0', '#2a58b8', '#267a8a', '#2d7a4a', '#5a3aa0'];

function Waveform() {
  return (
    <svg viewBox="0 0 268 280" preserveAspectRatio="none" className="size-full">
      <defs>
        <linearGradient id="haze" x1="0" y1="0" x2="0" y2="1">
          <stop offset="0" stopColor="#1018a0" stopOpacity="0" />
          <stop offset=".45" stopColor="#1820b8" stopOpacity=".5" />
          <stop offset="1" stopColor="#4060e0" />
        </linearGradient>
        <linearGradient id="spike" x1="0" y1="0" x2="0" y2="1">
          <stop offset="0" stopColor="#143a50" stopOpacity="0" />
          <stop offset=".7" stopColor="#1e4a78" stopOpacity=".5" />
          <stop offset="1" stopColor="#2c50b8" stopOpacity=".7" />
        </linearGradient>
      </defs>
      {percent.map((p, i) => (
        <path key={p} d={`M0 ${3.5 + i * 27}H268`} stroke={i % 2 ? '#242424' : '#353535'} />
      ))}
      {Array.from({ length: 268 }, (_, x) => {
        const h = envelope(x) * (0.35 + 0.65 * noise(x));
        return <rect key={x} x={x} y={268 - h} width="1" height={h} fill="url(#spike)" />;
      })}
      {Array.from({ length: 900 }, (_, i) => {
        const x = Math.floor(noise(i + 300) * 268);
        const y = 268 - envelope(x) * 1.3 * noise(i + 2000);
        return <rect key={i} x={x} y={y} width="1" height={4} fill={hues[i % 5]} opacity=".2" />;
      })}
      <path d="M0 260L60 256 110 252 130 256 150 253 200 253 268 258V271H0z" fill="url(#haze)" />
      <path d="M130 263L160 261 200 262 268 265V267H130z" fill="#7038b0" opacity=".5" />
      <path d="M0 269L60 267 110 265 120 266 268 267V272H0z" fill="#3aa81c" />
      <path d="M0 270L60 268 110 267 268 269V273H0z" fill="#a88a10" />
      <path d="M0 272L130 270.500 268 272V274H0z" fill="#b8541a" />
      <path d="M0 273.500H268" stroke="#f4e890" strokeWidth="2" />
      <path d="M45 275H240" stroke="#c04890" />
    </svg>
  );
}

function ScopesPanel() {
  const [clamp, setClamp] = useState(true);

  return (
    <section className="flex w-80 shrink-0 flex-col bg-[#232323] text-[#8e8e8e]">
      <div className="flex h-7 shrink-0 items-center gap-2 pb-px pl-3 text-[#b8b8b8]">
        <h2>Lumetri Scopes</h2>
        <MenuGlyph />
      </div>
      <div className="flex min-h-0 flex-1 gap-0.5 pt-1.5 text-xs leading-[14px]">
        <ul className="flex w-6 flex-col justify-between text-right">
          {percent.map((p) => <li key={p}>{p}</li>)}
        </ul>
        <div className="my-1 min-w-0 flex-1 bg-black">
          <Waveform />
        </div>
        <ul className="flex w-[25px] flex-col justify-between">
          {levels.map((l) => <li key={l}>{l}</li>)}
        </ul>
      </div>
      <div className="flex h-[39px] shrink-0 items-center justify-end pr-3 pb-0.5">
        <button aria-label="Scope settings">
          <svg width="14" height="14" viewBox="0 0 14 14">
            <path d="M0 3l3 2 2-2-2-3c4-1 6 2 5 5l6 6-2.500 2.500L5.500 7.500C2 8.500-.5 6 0 3z" fill="#b4b4b4" />
          </svg>
        </button>
        <label className="ml-3 flex items-center gap-[3px]">
          <span className="relative flex size-[14px]">
            <input
              type="checkbox"
              checked={clamp}
              onChange={(e) => setClamp(e.target.checked)}
              className="size-[14px] appearance-none rounded-xs border border-[#9a9a9a] checked:bg-[#9a9a9a]"
            />
            {clamp && (
              <svg width="14" height="14" viewBox="0 0 14 14" className="pointer-events-none absolute inset-0">
                <path d="M3 7l3 3.500L11.500 3.500" stroke="#1c1c1c" strokeWidth="2" fill="none" />
              </svg>
            )}
          </span>
          Clamp Signal
        </label>
        <Select
          label="Bit depth"
          options={['8 Bit']}
          className="ml-[7px] h-4 w-[60px]"
          selectClassName="rounded-[3px] border border-[#303030] bg-[#1b1b1b] pl-1.5 leading-[14px] text-[#b8b8b8]"
        />
      </div>
    </section>
  );
}

export default function App() {
  return (
    <div className="flex h-screen flex-col overflow-hidden bg-[#161616] pb-0.5 font-['Noto_Sans_CJK_SC',sans-serif] text-[11px] leading-4">
      <TitleBar />
      <MenuBar />
      <Toolbar />
      <main className="flex min-h-0 flex-1 flex-col gap-1 pt-1 pl-px">
        <div className="flex min-h-0 flex-[644_1_0%] gap-1">
          <ProjectPanel />
          <FlowchartPanel />
          <RightColumn />
        </div>
        <div className="flex min-h-0 flex-[358_1_0%] gap-1">
          <TimelinePanel />
          <AudioPanel />
          <ScopesPanel />
        </div>
      </main>
    </div>
  );
}
